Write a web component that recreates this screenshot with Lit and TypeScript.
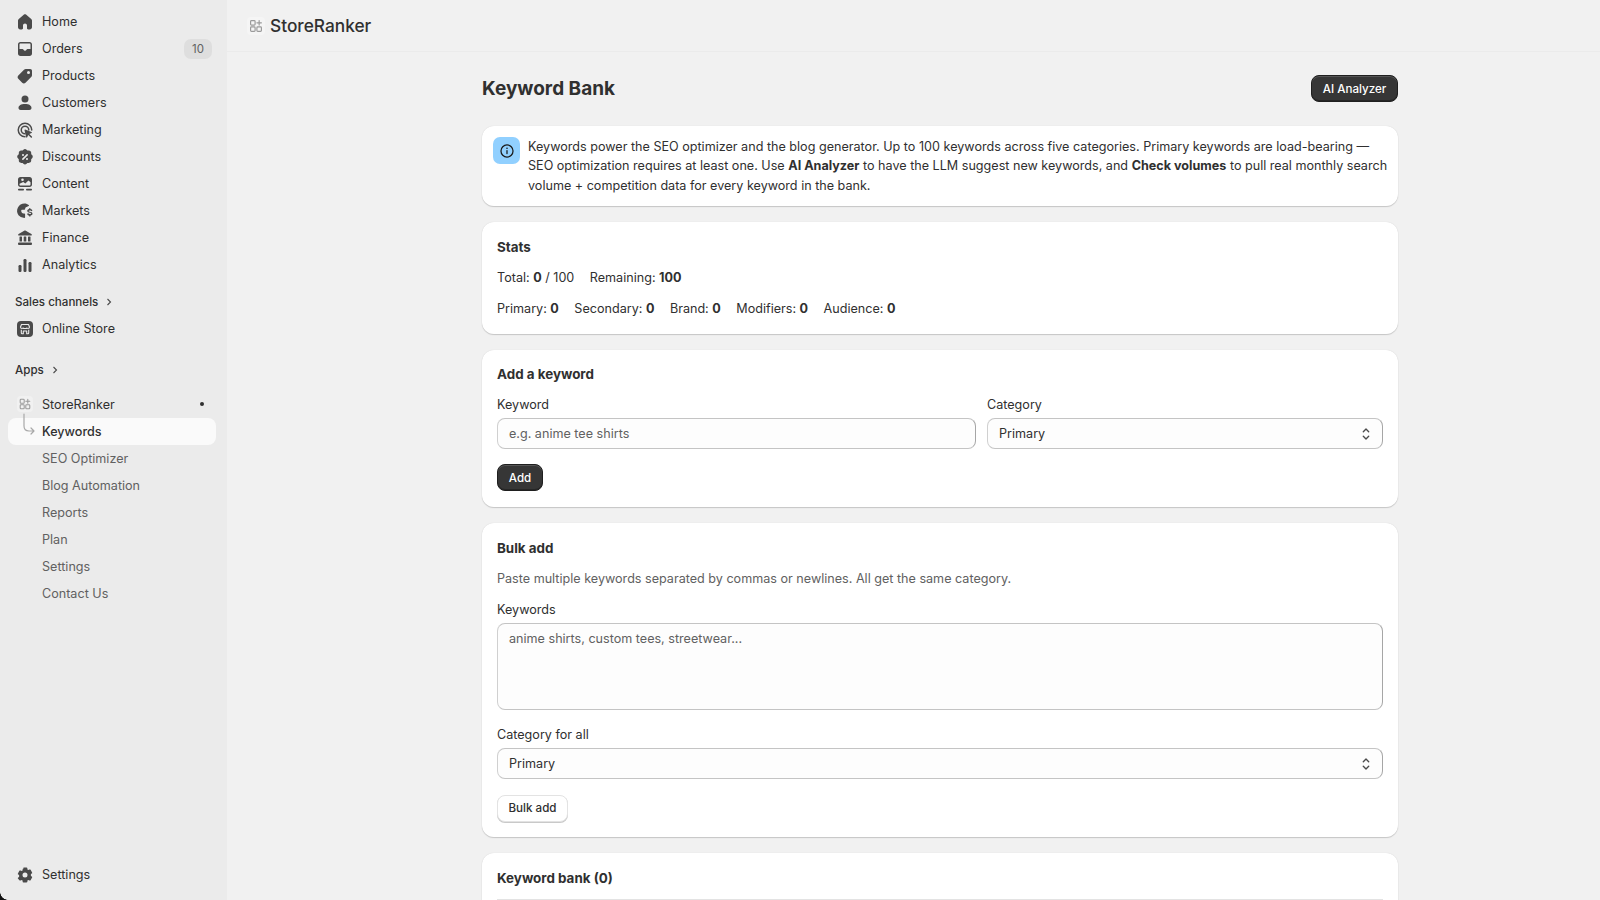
import { LitElement, html, css, svg } from "lit";
import { customElement } from "lit/decorators.js";

const icons: Record<string, unknown> = {
  home: svg`<path d="M9 2.600c.6-.5 1.400-.5 2 0l5.200 4.400c.5.4.8 1 .8 1.600v6.600c0 1.200-1 2.200-2.200 2.200h-1.600c-.7 0-1.200-.5-1.200-1.200v-2.700c0-1.100-.9-2-2-2s-2 .9-2 2v2.700c0 .7-.5 1.200-1.200 1.200H5.200c-1.200 0-2.200-1-2.200-2.200V8.600c0-.6.3-1.200.8-1.600z"/>`,
  orders: svg`<path fill-rule="evenodd" d="M5.500 3h9C16 3 17 4 17 5.500v9c0 1.500-1 2.500-2.500 2.500h-9C4 17 3 16 3 14.500v-9C3 4 4 3 5.500 3zm0 1.500c-.6 0-1 .4-1 1V10h3c.5 0 .8.300 1 .7.300.7.900 1.100 1.500 1.100s1.200-.4 1.500-1.100c.2-.4.500-.7 1-.7h3V5.500c0-.6-.4-1-1-1z"/>`,
  products: svg`<path fill-rule="evenodd" d="M10.800 3h4.400C16.200 3 17 3.800 17 4.800v4.400c0 .7-.3 1.300-.8 1.800l-5.700 5.700c-.9.900-2.400.9-3.300 0l-3.900-3.900c-.9-.9-.9-2.400 0-3.300L9 3.800c.5-.5 1.100-.8 1.800-.8zM13.500 8a1.500 1.500 0 1 0 0-3 1.500 1.500 0 0 0 0 3z"/>`,
  customers: svg`<circle cx="10" cy="6" r="3.500"/><path d="M3.500 15c0-2.500 2.500-4 6.500-4s6.500 1.500 6.500 4c0 1.300-1 2-2.200 2H5.700c-1.200 0-2.200-.7-2.200-2z"/>`,
  marketing: svg`<path d="M10 2.500a7.500 7.500 0 0 1 7.500 7.500c0 .5-.3.800-.8.800s-.7-.3-.7-.8a6 6 0 1 0-6 6c.5 0 .8.200.8.700s-.3.800-.8.800a7.500 7.500 0 0 1 0-15z"/><path d="M10 5.500a4.500 4.500 0 0 1 4.500 4.500c0 .4-.3.700-.7.700s-.8-.3-.8-.7a3 3 0 1 0-3 3c.4 0 .7.300.7.800s-.3.700-.7.700a4.500 4.500 0 0 1 0-9z"/><path d="M10.200 9.500c-.4-.1-.8.300-.7.700l1.700 7c.1.500.8.600 1 .1l1-2.300 2.600 2.600c.3.300.8.300 1.100 0 .3-.3.300-.8 0-1.100l-2.600-2.600 2.300-1c.5-.2.400-.9-.1-1z"/>`,
  discounts: svg`<path fill-rule="evenodd" d="M8.400 2.700c.9-.9 2.300-.9 3.200 0l.8.800h1.500c1.300 0 2.300 1 2.300 2.300v1.400l.9.900c.9.900.9 2.300 0 3.200l-.9.900v1.400c0 1.300-1 2.300-2.300 2.300h-1.500l-.8.800c-.9.900-2.300.9-3.200 0l-.8-.8H6.100c-1.300 0-2.300-1-2.300-2.300v-1.400l-.9-.9c-.9-.9-.9-2.300 0-3.200l.9-.9V5.800c0-1.300 1-2.300 2.300-2.300h1.500zM12.700 7.300c-.3-.3-.8-.3-1.100 0l-4.300 4.300c-.3.300-.3.800 0 1.100.3.300.8.300 1.100 0l4.300-4.300c.3-.3.300-.8 0-1.100zM8 9a1 1 0 1 0 0-2 1 1 0 0 0 0 2zm4 4a1 1 0 1 0 0-2 1 1 0 0 0 0 2z"/>`,
  content: svg`<path fill-rule="evenodd" d="M5.500 3h9C16 3 17 4 17 5.500v5c0 1.500-1 2.500-2.500 2.500h-9C4 13 3 12 3 10.500v-5C3 4 4 3 5.500 3zM4.500 9.700v.8c0 .6.400 1 1 1h9c.6 0 1-.4 1-1V8.300l-2-1.800-3.200 3-2-1.500zM7.500 7a1.300 1.300 0 1 0 0-2.600 1.300 1.300 0 0 0 0 2.600z"/><rect x="3" y="14.800" width="6" height="1.700" rx=".8"/><rect x="11" y="14.800" width="6" height="1.700" rx=".8"/>`,
  markets: svg`<path d="M9.500 2.600c1.600 0 3.200.6 4.400 1.600.3.300.2.700-.2.900l-2.700 1.100c-.5.200-.8.700-.8 1.200 0 .7-.5 1.300-1.200 1.300H7.300c-.8 0-1.300.7-1.100 1.400l.3 1c.2.800 1 1.300 1.800 1.300h1c.6 0 .8.300.8.800v3.100c0 .4-.3.700-.7.700a7.700 7.700 0 0 1-5.900-2.700A7.400 7.400 0 0 1 9.500 2.600z"/><path d="M14.800 7c.4 0 .7.300.7.700v.3c1 .2 1.800.8 1.800 1.500 0 .4-.3.700-.7.700-.3 0-.5-.1-.7-.4-.2-.2-.6-.4-1.100-.4-.7 0-1.100.3-1.100.6s.3.500 1.300.7c1.300.2 2.500.7 2.500 2 0 .9-.8 1.600-2 1.800v.4c0 .4-.3.700-.7.700s-.7-.3-.7-.7v-.4c-1.100-.2-1.900-.8-1.900-1.600 0-.4.300-.7.700-.7.300 0 .5.100.7.400.2.300.6.500 1.200.5.700 0 1.200-.3 1.200-.6s-.3-.5-1.300-.7c-1.300-.2-2.500-.7-2.500-2 0-.9.800-1.600 1.900-1.800v-.3c0-.4.300-.7.700-.7z"/>`,
  finance: svg`<path d="M9.200 2.800c.5-.3 1.100-.3 1.600 0l5.600 3.100c.8.500.5 1.600-.4 1.600H4c-.9 0-1.200-1.100-.4-1.600z"/><rect x="4.500" y="8.500" width="2.500" height="5" rx=".5"/><rect x="8.700" y="8.500" width="2.600" height="5" rx=".5"/><rect x="13" y="8.500" width="2.500" height="5" rx=".5"/><rect x="3" y="14.500" width="14" height="2.500" rx="1"/>`,
  analytics: svg`<rect x="3.500" y="10" width="3" height="7" rx="1.200"/><rect x="8.500" y="4" width="3" height="13" rx="1.200"/><rect x="13.500" y="7" width="3" height="10" rx="1.200"/>`,
  store: svg`<rect x="2" y="2" width="16" height="16" rx="4"/><path d="M6.500 5.500h7l1 2.500c0 .9-.7 1.500-1.500 1.500-.5 0-.8-.2-1-.5-.3.300-.6.500-1 .5H9c-.4 0-.7-.2-1-.5-.2.300-.5.500-1 .5-.8 0-1.500-.6-1.500-1.500zM6.300 10.700v3.300c0 .4.300.8.700.8h1.300v-2.800h3.400v2.800H13c.4 0 .7-.4.700-.8v-3.300" fill="none" stroke="#ebebeb" stroke-width="1.100" stroke-linejoin="round"/>`,
  gear: svg`<path fill-rule="evenodd" d="M8.500 2.500h3c.5 0 .9.400.9.900v1c.4.200.8.400 1.100.6l.9-.5c.4-.2 1-.1 1.200.3l1.500 2.600c.2.400.1 1-.3 1.200l-.9.500v1.800l.9.500c.4.200.5.800.3 1.200l-1.500 2.600c-.2.400-.8.500-1.200.3l-.9-.5c-.3.200-.7.400-1.100.6v1c0 .5-.4.900-.9.900h-3c-.5 0-.9-.4-.9-.9v-1c-.4-.2-.8-.4-1.100-.6l-.9.500c-.4.200-1 .1-1.200-.3L2.900 13.600c-.2-.4-.1-1 .3-1.200l.9-.5V10.100l-.9-.5c-.4-.2-.5-.8-.3-1.200l1.500-2.600c.2-.4.800-.5 1.200-.3l.9.500c.3-.2.700-.4 1.100-.6v-1c0-.5.400-.9.900-.9zM10 12.500a2.500 2.500 0 1 0 0-5 2.500 2.500 0 0 0 0 5z"/>`,
};

const mainNav = [
  ["home", "Home"],
  ["orders", "Orders"],
  ["products", "Products"],
  ["customers", "Customers"],
  ["marketing", "Marketing"],
  ["discounts", "Discounts"],
  ["content", "Content"],
  ["markets", "Markets"],
  ["finance", "Finance"],
  ["analytics", "Analytics"],
];

const subNav = ["SEO Optimizer", "Blog Automation", "Reports", "Plan", "Settings", "Contact Us"];

const chevrons = svg`<path d="M7 7.500 10 4.500l3 3M7 12.500l3 3 3-3" fill="none" stroke="#4a4a4a" stroke-width="1.500" stroke-linecap="round" stroke-linejoin="round"/>`;

const appGlyph = svg`<g fill="none" stroke="#9a9a9a" stroke-width="1.300"><rect x="4" y="4" width="5" height="5" rx="1"/><rect x="4" y="11" width="5" height="5" rx="1"/><rect x="11" y="11" width="5" height="5" rx="1"/><path d="M13.500 4v5M11 6.500h5" stroke-linecap="round"/></g>`;

@customElement("app-root")
export class AppRoot extends LitElement {
  static styles = css`
    :host {
      display: block;
      height: 900px;
      overflow: hidden;
      position: relative;
      background: #f1f1f1;
      color: #303030;
      font-family: Inter, "Liberation Sans", sans-serif;
      font-size: 12.6px;
    }
    .layout {
      display: flex;
      height: 900px;
    }
    .sidebar {
      width: 227px;
      flex: none;
      background: #ebebeb;
      display: flex;
      flex-direction: column;
      padding-top: 8px;
      box-sizing: border-box;
    }
    .row {
      display: flex;
      align-items: center;
      height: 27px;
      padding: 0 15px 0 15px;
      color: #303030;
    }
    .row svg.icon {
      width: 20px;
      height: 20px;
      fill: #4a4a4a;
      flex: none;
      margin-right: 7px;
    }
    .badge {
      margin-left: auto;
      background: #dedede;
      color: #616161;
      font-size: 11.500px;
      width: 28px;
      height: 20px;
      border-radius: 7px;
      display: flex;
      align-items: center;
      justify-content: center;
    }
    .section {
      display: flex;
      align-items: center;
      gap: 6px;
      height: 27px;
      padding-left: 15px;
      font-size: 11.600px;
      font-weight: 500;
      color: #303030;
    }
    .section svg {
      width: 10px;
      height: 10px;
    }
    .channels {
      margin-top: 10px;
    }
    .apps {
      margin-top: 14px;
    }
    .tile {
      width: 16px;
      height: 16px;
      background: #f1f1f1;
      border-radius: 4px;
      margin: 0 9px 0 17px;
      flex: none;
    }
    .tile svg {
      display: block;
      width: 16px;
      height: 16px;
    }
    .app-row {
      padding-left: 0;
      margin-top: 7.500px;
    }
    .dot {
      width: 4px;
      height: 4px;
      border-radius: 50%;
      background: #303030;
      margin-left: auto;
      margin-right: 8px;
    }
    .sub {
      height: 27px;
      display: flex;
      align-items: center;
      padding-left: 42px;
      color: #616161;
    }
    .active {
      margin: 0 11px 0 8px;
      padding-left: 34px;
      height: 27px;
      border-radius: 8px;
      background: #fafafa;
      color: #303030;
      font-weight: 550;
      position: relative;
    }
    .branch {
      position: absolute;
      left: 14px;
      top: -5px;
      width: 22px;
      height: 24px;
    }
    .spacer {
      flex: 1;
    }
    .bottom {
      margin-bottom: 12px;
    }
    .main {
      flex: 1;
      min-width: 0;
    }
    .topbar {
      height: 51px;
      border-bottom: 1px solid #ebebeb;
      box-sizing: content-box;
      display: flex;
      align-items: center;
      padding-left: 20px;
      gap: 5px;
      font-size: 17.300px;
      font-weight: 500;
      color: #303030;
    }
    .topbar .tile {
      width: 18px;
      height: 18px;
      margin: 0;
      background: #f5f5f5;
    }
    .topbar .tile svg {
      width: 18px;
      height: 18px;
    }
    .content {
      width: 916px;
      margin-left: 255px;
      display: flex;
      flex-direction: column;
      gap: 16px;
    }
    .head {
      display: flex;
      justify-content: space-between;
      align-items: center;
      height: 27px;
      margin-top: 23px;
      margin-bottom: 8px;
    }
    h1 {
      margin: 0;
      font-size: 19px;
      font-weight: 650;
      color: #303030;
    }
    .btn {
      display: inline-flex;
      align-items: center;
      justify-content: center;
      height: 27px;
      box-sizing: border-box;
      border-radius: 8px;
      font-family: inherit;
      font-size: 11.600px;
      font-weight: 500;
    }
    .btn.primary {
      background: #363636;
      color: #fff;
      border: 1px solid #1f1f1f;
      box-shadow: inset 0 1px 0 #555, inset 0 -1px 0 #262626;
    }
    .btn.secondary {
      background: #fff;
      color: #303030;
      border: 1px solid #e3e3e3;
      box-shadow: 0 1px 0 #c9c9c9;
    }
    .card {
      background: #fff;
      border-radius: 12px;
      box-sizing: border-box;
      box-shadow: 0 0 1px #cfcfcf, 0 1px 1px #c4c4c4;
      padding: 15px;
    }
    .info {
      height: 80px;
      padding: 11px 8px 11px 11px;
      display: flex;
      gap: 8px;
      line-height: 19.400px;
    }
    .info-icon {
      width: 27px;
      height: 27px;
      flex: none;
      border-radius: 7px;
      background: #91d0ff;
      display: flex;
      align-items: center;
      justify-content: center;
    }
    .info-icon svg {
      width: 18px;
      height: 18px;
    }
    b {
      font-weight: 650;
    }
    h2 {
      margin: 0;
      font-size: 13.400px;
      line-height: 20px;
      font-weight: 650;
      color: #303030;
    }
    .stats {
      height: 111.500px;
    }
    .stat-line {
      display: flex;
      gap: 15.500px;
      height: 20px;
      align-items: center;
      margin-top: 10.500px;
    }
    .stat-line + .stat-line {
      margin-top: 11px;
    }
    .add-card {
      height: 157px;
      padding-top: 14.500px;
    }
    .bulk-card {
      height: 314.500px;
    }
    .field-row {
      display: grid;
      grid-template-columns: 479px 396px;
      gap: 11px;
      margin-top: 11px;
    }
    .label {
      line-height: 20px;
      height: 20px;
      color: #303030;
      margin-bottom: 3px;
    }
    .input {
      height: 31px;
      box-sizing: border-box;
      border: 1px solid #d0d0d0;
      border-top-color: #c4c4c4;
      border-bottom-color: #c4c4c4;
      border-right-color: #a6a6a6;
      border-radius: 8px;
      background: #fdfdfd;
      display: flex;
      align-items: center;
      padding: 0 11px;
      color: #303030;
    }
    .placeholder {
      color: #616161;
    }
    .input svg {
      width: 18px;
      height: 18px;
      margin-left: auto;
      margin-right: -3.500px;
    }
    .add-btn {
      width: 46px;
      margin-top: 15px;
    }
    .desc {
      color: #616161;
      line-height: 20px;
      margin-top: 11px;
    }
    .bulk-label {
      margin-top: 11px;
    }
    .textarea {
      height: 87px;
      align-items: flex-start;
      padding-top: 7px;
    }
    .all-label {
      margin-top: 15.500px;
      margin-bottom: 3px;
    }
    .bulk-btn {
      width: 71px;
      margin-top: 15.500px;
    }
    .bank {
      height: 120px;
      padding-top: 14.500px;
    }
    .bank hr {
      border: none;
      border-top: 1px solid #e3e3e3;
      margin: 11px 0 0;
    }
    .corner {
      position: absolute;
      left: 0;
      bottom: 0;
      width: 8px;
      height: 8px;
      background: radial-gradient(circle at 100% 0, transparent 7.500px, #111 8px);
    }
  `;

  render() {
    return html`
      <div class="layout">
        <aside class="sidebar">
          ${mainNav.map(
            ([icon, label]) => html`
              <div class="row">
                <svg class="icon" viewBox="0 0 20 20">${icons[icon]}</svg>
                <span>${label}</span>
                ${label === "Orders" ? html`<span class="badge">10</span>` : ""}
              </div>
            `,
          )}
          <div class="section channels">
            Sales channels
            <svg viewBox="0 0 10 10"><path d="M3.500 2 6.500 5l-3 3" fill="none" stroke="#4a4a4a" stroke-width="1.100"/></svg>
          </div>
          <div class="row"><svg class="icon" viewBox="0 0 20 20">${icons.store}</svg><span>Online Store</span></div>
          <div class="section apps">
            Apps
            <svg viewBox="0 0 10 10"><path d="M3.500 2 6.500 5l-3 3" fill="none" stroke="#4a4a4a" stroke-width="1.100"/></svg>
          </div>
          <div class="row app-row">
            <span class="tile"><svg viewBox="0 0 20 20">${appGlyph}</svg></span>
            <span>StoreRanker</span>
            <span class="dot"></span>
          </div>
          <div class="sub active">
            <svg class="branch" viewBox="0 0 22 24"><path d="M2 1v12c0 3 2 5 5 5h5M9 15l3 3-3 3" fill="none" stroke="#a8a8a8" stroke-width="1.200" stroke-linecap="round" stroke-linejoin="round"/></svg>
            Keywords
          </div>
          ${subNav.map((label) => html`<div class="sub">${label}</div>`)}
          <div class="spacer"></div>
          <div class="row bottom"><svg class="icon" viewBox="0 0 20 20">${icons.gear}</svg><span>Settings</span></div>
        </aside>
        <div class="main">
          <header class="topbar">
            <span class="tile"><svg viewBox="0 0 20 20">${appGlyph}</svg></span>
            StoreRanker
          </header>
          <div class="content">
            <div class="head">
              <h1>Keyword Bank</h1>
              <span class="btn primary" style="width:87px">AI Analyzer</span>
            </div>
            <section class="card info">
              <div class="info-icon">
                <svg viewBox="0 0 20 20"><circle cx="10" cy="10" r="6.700" fill="none" stroke="#1a1a1a" stroke-width="1.400"/><rect x="9.300" y="9" width="1.400" height="4.500" rx=".7" fill="#1a1a1a"/><circle cx="10" cy="7" r=".9" fill="#1a1a1a"/></svg>
              </div>
              <div>
                Keywords power the SEO optimizer and the blog generator. Up to 100 keywords across five categories. Primary keywords are load-bearing — SEO optimization requires at least one. Use <b>AI Analyzer</b> to have the LLM suggest new keywords, and <b>Check volumes</b> to pull real monthly search volume + competition data for every keyword in the bank.
              </div>
            </section>
            <section class="card stats">
              <h2>Stats</h2>
              <div class="stat-line">
                <span>Total: <b>0</b> / 100</span>
                <span>Remaining: <b>100</b></span>
              </div>
              <div class="stat-line">
                <span>Primary: <b>0</b></span>
                <span>Secondary: <b>0</b></span>
                <span>Brand: <b>0</b></span>
                <span>Modifiers: <b>0</b></span>
                <span>Audience: <b>0</b></span>
              </div>
            </section>
            <section class="card add-card">
              <h2>Add a keyword</h2>
              <div class="field-row">
                <div>
                  <div class="label">Keyword</div>
                  <div class="input"><span class="placeholder">e.g. anime tee shirts</span></div>
                </div>
                <div>
                  <div class="label">Category</div>
                  <div class="input">Primary<svg viewBox="0 0 20 20">${chevrons}</svg></div>
                </div>
              </div>
              <span class="btn primary add-btn">Add</span>
            </section>
            <section class="card bulk-card">
              <h2>Bulk add</h2>
              <div class="desc">Paste multiple keywords separated by commas or newlines. All get the same category.</div>
              <div class="label bulk-label">Keywords</div>
              <div class="input textarea"><span class="placeholder">anime shirts, custom tees, streetwear...</span></div>
              <div class="label all-label">Category for all</div>
              <div class="input">Primary<svg viewBox="0 0 20 20">${chevrons}</svg></div>
              <span class="btn secondary bulk-btn">Bulk add</span>
            </section>
            <section class="card bank">
              <h2>Keyword bank (0)</h2>
              <hr />
            </section>
          </div>
        </div>
      </div>
      <div class="corner"></div>
    `;
  }
}
